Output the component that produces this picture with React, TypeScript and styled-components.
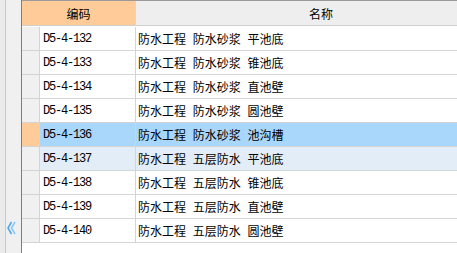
import styled, { createGlobalStyle } from "styled-components";

const GlobalStyle = createGlobalStyle`
  html, body {
    margin: 0;
    padding: 0;
    background: #ffffff;
  }
`;

type RowKind = "normal" | "selected" | "hover";

const ROWS: { code: string; name: string; kind: RowKind }[] = [
  { code: "D5-4-132", name: "防水工程 防水砂浆 平池底", kind: "normal" },
  { code: "D5-4-133", name: "防水工程 防水砂浆 锥池底", kind: "normal" },
  { code: "D5-4-134", name: "防水工程 防水砂浆 直池壁", kind: "normal" },
  { code: "D5-4-135", name: "防水工程 防水砂浆 圆池壁", kind: "normal" },
  { code: "D5-4-136", name: "防水工程 防水砂浆 池沟槽", kind: "selected" },
  { code: "D5-4-137", name: "防水工程 五层防水 平池底", kind: "hover" },
  { code: "D5-4-138", name: "防水工程 五层防水 锥池底", kind: "normal" },
  { code: "D5-4-139", name: "防水工程 五层防水 直池壁", kind: "normal" },
  { code: "D5-4-140", name: "防水工程 五层防水 圆池壁", kind: "normal" },
];

const rowBg = (kind: RowKind) =>
  kind === "selected" ? "#a9d6fb" : kind === "hover" ? "#e3edf7" : "#ffffff";

export default function App() {
  return (
    <>
      <GlobalStyle />
      <Page>
        <SideStrip>
          <Collapse>
            <svg width="9" height="14" viewBox="0 0 9 14">
              <path d="M4.5 1 L1 7 L4.5 13" fill="none" stroke="#4ea9ef" strokeWidth="1.6" />
              <path d="M8 1 L4.5 7 L8 13" fill="none" stroke="#8cc8f5" strokeWidth="1.6" />
            </svg>
          </Collapse>
        </SideStrip>
        <Grid>
          <CodeHead>编码</CodeHead>
          <NameHead>名称</NameHead>
          {ROWS.map((row) => (
            <Row key={row.code} $bg={rowBg(row.kind)}>
              <RowHeader $current={row.kind === "selected"} />
              <CodeCell>{row.code}</CodeCell>
              <NameCell>{row.name}</NameCell>
            </Row>
          ))}
        </Grid>
      </Page>
    </>
  );
}

const Page = styled.div`
  display: flex;
  width: 457px;
  height: 253px;
  overflow: hidden;
  background: #ffffff;
`;

const SideStrip = styled.div`
  flex: 0 0 auto;
  width: 22px;
  height: 100%;
  box-sizing: border-box;
  display: flex;
  flex-direction: column;
  justify-content: flex-end;
  padding-bottom: 18px;
  padding-left: 6px;
  background: linear-gradient(to right, #ebebeb 0, #ebebeb 5px, #c9c9c9 5px, #c9c9c9 6px, #f0f0f0 6px);
  border-right: 1px solid #7d7d8a;
`;

const Collapse = styled.div`
  height: 14px;
  margin-left: 1px;
  line-height: 0;
`;

const Grid = styled.div`
  flex: 0 0 auto;
  width: 484px;
  display: grid;
  grid-template-columns: 18px 96px 1fr;
  grid-auto-rows: 24px;
  grid-template-rows: 26px;
  align-content: start;
  border-top: 1px solid #9a9a9a;
  font-family: "Noto Sans CJK SC", "Noto Sans", sans-serif;
  font-size: 12px;
  color: #000000;
`;

const HeadCell = styled.div`
  display: flex;
  align-items: center;
  justify-content: center;
  border-bottom: 1px solid #cfcfcf;
  box-sizing: border-box;
  height: 25px;
`;

const CodeHead = styled(HeadCell)`
  grid-column: 1 / 3;
  background: #ffcc99;
  border-right: 1px solid #d8d8d8;
`;

const NameHead = styled(HeadCell)`
  background: #eeeeee;
`;

const Row = styled.div<{ $bg: string }>`
  display: contents;

  & > div:not(:first-child) {
    background: ${(p) => p.$bg};
  }
`;

const Cell = styled.div`
  box-sizing: border-box;
  border-bottom: 1px solid #d4d4d4;
  border-right: 1px solid #d4d4d4;
  display: flex;
  align-items: center;
  white-space: pre;
`;

const RowHeader = styled(Cell)<{ $current: boolean }>`
  background: ${(p) => (p.$current ? "#ffcc99" : "#f0f0f0")};
`;

const CodeCell = styled(Cell)`
  padding-left: 3px;
  font-family: "Liberation Mono", "DejaVu Sans Mono", monospace;
  font-size: 12px;
  letter-spacing: -1.2px;
`;

const NameCell = styled(Cell)`
  padding-left: 2px;
  word-spacing: 4px;
`;
